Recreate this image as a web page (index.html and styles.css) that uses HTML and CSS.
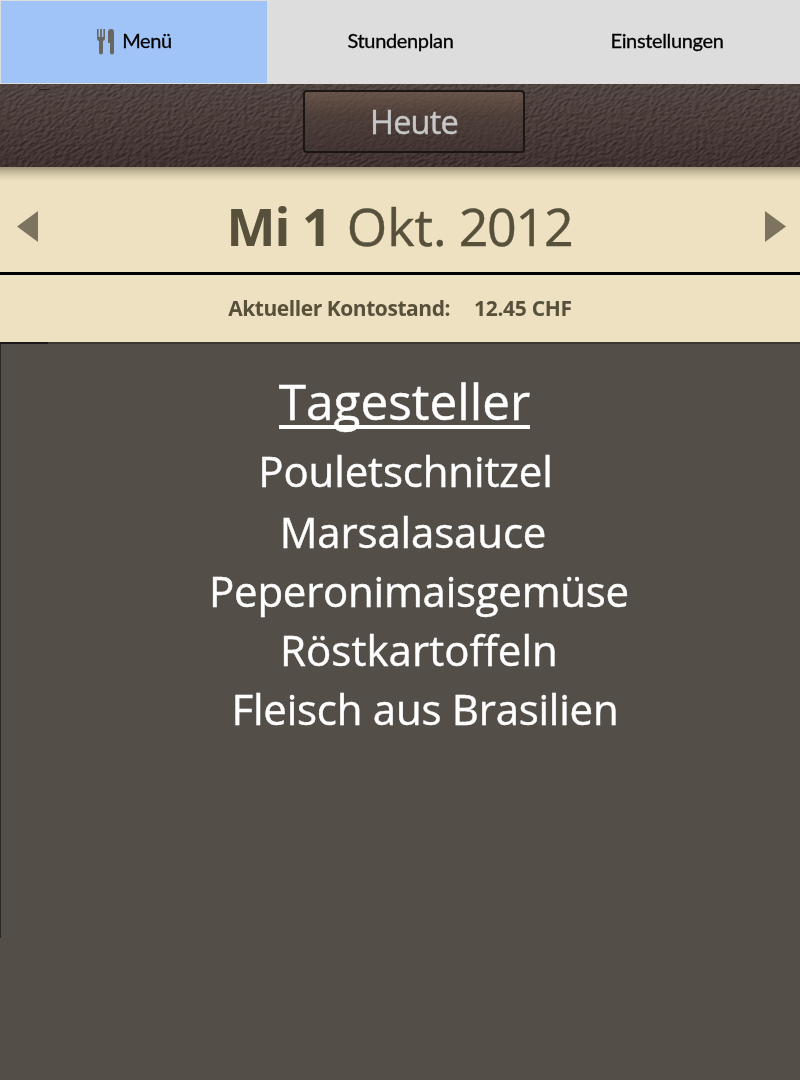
FILE: index.html
```html
<!DOCTYPE html>
<html lang="de">
<head>
<meta charset="utf-8">
<title>Menü</title>
<link rel="stylesheet" href="styles.css">
</head>
<body>
<nav class="tabs">
  <a class="tab tab-active">
    <svg class="cutlery" width="18" height="26" viewBox="0 0 18 26" fill="#686663">
      <path d="M0 0h1.6v8h1.5V0h1.8v8h1.5V0H8v9.5Q8 11.500 6 12v11.500Q6 25.500 4 25.500T2 23.500V12Q0 11.500 0 9.500Z"/>
      <path d="M11 3Q11 0 14 0t3 3v20.500q0 2-2 2t-2-2V14h-2Z"/>
    </svg>
    <span>Menü</span>
  </a>
  <a class="tab">Stundenplan</a>
  <a class="tab">Einstellungen</a>
</nav>
<header class="leather">
  <svg class="grain" width="800" height="83" aria-hidden="true">
    <defs>
      <filter id="hide" x="0" y="0" width="100%" height="100%" color-interpolation-filters="sRGB">
        <feTurbulence type="fractalNoise" baseFrequency=".2 .42" numOctaves="3" seed="8" result="n"/>
        <feDiffuseLighting in="n" surfaceScale="1.500" diffuseConstant=".74" lighting-color="#fff">
          <feDistantLight azimuth="250" elevation="50"/>
        </feDiffuseLighting>
      </filter>
    </defs>
    <g transform="rotate(-28 400 42)"><rect x="-60" y="-220" width="920" height="520" filter="url(#hide)"/></g>
    <path d="M39 5.500h11M749 5.500h11" stroke="#000"/>
  </svg>
  <button class="today">Heute</button>
</header>
<section class="date-bar">
  <svg class="arrow" width="21" height="31" viewBox="0 0 21 31"><path d="M0 15.500 21 0v31z"/></svg>
  <h1 class="date"><b>Mi 1</b><span>Okt.</span><span class="year">2012</span></h1>
  <svg class="arrow" width="21" height="31" viewBox="0 0 21 31"><path d="M21 15.500 0 0v31z"/></svg>
</section>
<section class="balance">
  <span class="balance-label">Aktueller Kontostand:</span>
  <span class="balance-value">12.45 CHF</span>
</section>
<main class="menu">
  <h2 class="menu-title">Tagesteller</h2>
  <ul class="dishes">
    <li class="dish poulet">Pouletschnitzel</li>
    <li class="dish marsala">Marsalasauce</li>
    <li class="dish peperoni">Peperonimaisgemüse</li>
    <li class="dish roesti">Röstkartoffeln</li>
    <li class="dish origin">Fleisch aus Brasilien</li>
  </ul>
</main>
</body>
</html>
```
FILE: styles.css
```css
* { box-sizing: border-box; }
body {
  margin: 0;
  min-height: 1080px;
  display: flex;
  flex-direction: column;
  background: #534f48;
  font-family: "Open Sans", "Noto Sans", sans-serif;
}
h1, h2, ul { margin: 0; padding: 0; font-weight: 400; }

.tabs { display: grid; grid-template-columns: 267px 266px 267px; height: 84px; background: #ddd; }
.tab {
  display: flex;
  align-items: center;
  justify-content: center;
  gap: 7px;
  padding: 0 0 4px 1px;
  font: 20px Lato, sans-serif;
  letter-spacing: -.35px;
  color: #000;
  -webkit-text-stroke: .3px #000;
}
.tab-active { border: 1px solid #ddd; border-right: 0; background: #a0c4f8; padding-bottom: 5px; }
.cutlery { display: block; margin-top: 4px; }

.leather {
  position: relative;
  display: flex;
  justify-content: center;
  height: 83px;
  padding: 6px 0 0 28px;
  overflow: hidden;
  background: linear-gradient(#4c403d, #443734 50%, #3a2d2b);
}
.grain { position: absolute; left: 0; top: 0; mix-blend-mode: soft-light; opacity: .65; }
.today {
  position: relative;
  width: 222px;
  height: 63px;
  padding: 0;
  border: 2px solid #1b1514;
  border-radius: 4px;
  background: linear-gradient(rgba(112, 88, 76, .75), rgba(80, 64, 56, .55) 40%, rgba(62, 49, 45, .4));
  font: 32.5px "Open Sans", sans-serif;
  letter-spacing: -.8px;
  color: #c8c8c8;
  -webkit-text-stroke: .4px #c8c8c8;
}

.date-bar {
  display: flex;
  align-items: center;
  justify-content: space-between;
  height: 108px;
  padding: 13px 14px 0 17px;
  border-bottom: 3px solid #000;
  background: linear-gradient(#a0957d, #c5b99c 5px, #e2d5b5 10px, #eee1c2 15px);
}
.arrow { fill: #7c745f; }
.date { display: flex; padding-right: 4px; font-size: 52px; line-height: 70px; color: #57503b; }
.date b { margin-right: 16px; letter-spacing: -1px; }
.date span { -webkit-text-stroke: .4px #57503b; }
.date .year { margin-left: 12px; letter-spacing: -1.3px; }

.balance {
  display: flex;
  justify-content: center;
  gap: 24px;
  height: 67px;
  background: #eee1c2;
  font-size: 21px;
  font-weight: 700;
  line-height: 66px;
  color: #57503b;
}
.balance-label { letter-spacing: -.45px; }
.balance-value { letter-spacing: -.3px; }

.menu {
  position: relative;
  display: flex;
  flex-direction: column;
  align-items: center;
  height: 596px;
  padding-top: 27px;
  border-top: 2px solid #3a3833;
  border-left: 1px solid #292724;
  color: #fff;
  -webkit-text-stroke: .4px #fff;
}
.menu::before { content: ""; position: absolute; left: -1px; top: -2px; width: 48px; height: 2px; background: #1b1a18; }
.menu-title {
  height: 58px;
  margin-left: 8px;
  border-bottom: 4px solid #fff;
  font-size: 49.5px;
  line-height: 60px;
}
.dishes { width: 100%; margin-top: 12px; list-style: none; }
.dish { font-size: 42px; line-height: 59px; text-align: center; }
.poulet { margin-bottom: 2px; padding-left: 10px; letter-spacing: -.15px; }
.marsala { padding-left: 25px; letter-spacing: -.15px; }
.peperoni { padding-left: 37px; letter-spacing: -.25px; }
.roesti { padding-left: 37px; letter-spacing: .05px; }
.origin { padding-left: 49px; letter-spacing: -.25px; }
```
